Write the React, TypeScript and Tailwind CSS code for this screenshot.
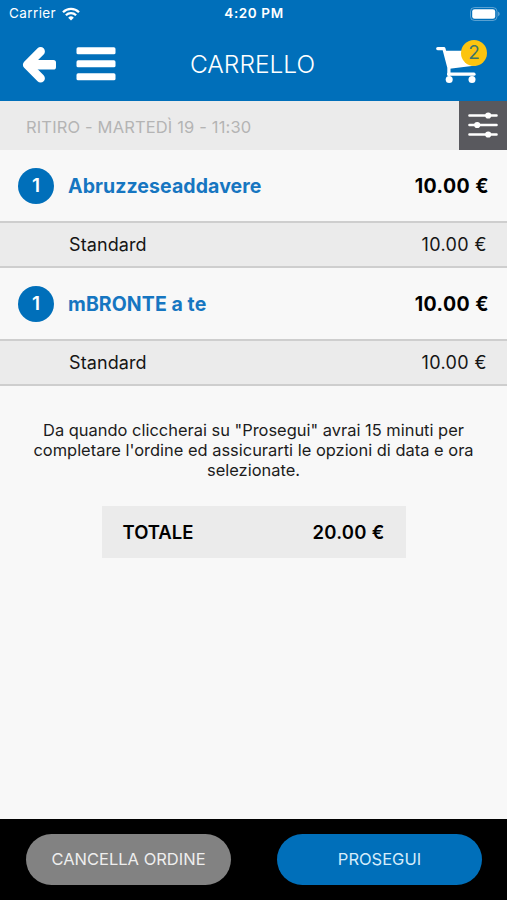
type Item = { qty: number; name: string; variant: string; price: string };

const ITEMS: Item[] = [
  { qty: 1, name: "Abruzzeseaddavere", variant: "Standard", price: "10.00 €" },
  { qty: 1, name: "mBRONTE a te", variant: "Standard", price: "10.00 €" },
];

function WifiIcon() {
  return (
    <svg width="18" height="14" viewBox="0 0 18 14" fill="none" stroke="white" strokeWidth="2.3">
      <path d="M1 5.2a11.4 11.4 0 0 1 16 0" />
      <path d="M3.9 8.2a7.3 7.3 0 0 1 10.2 0" />
      <path d="M9 13.6 6.2 10.7a4 4 0 0 1 5.6 0Z" fill="white" stroke="none" />
    </svg>
  );
}

function BatteryIcon() {
  return (
    <svg width="31" height="14" viewBox="0 0 31 14">
      <rect x="0.5" y="0.5" width="26.5" height="13" rx="4" fill="none" stroke="white" strokeOpacity="0.35" />
      <rect x="2.2" y="2.2" width="23" height="9.6" rx="2.4" fill="white" />
      <path d="M28.3 4.8c1.6.6 1.6 3.8 0 4.4Z" fill="white" fillOpacity="0.5" />
    </svg>
  );
}

function BackIcon() {
  return (
    <svg width="34" height="37" viewBox="0 0 34 37" fill="none" stroke="white" strokeLinejoin="round">
      <path d="M18.6 5.4 5.2 18.8l13.4 13.4" strokeWidth="8.6" strokeLinecap="round" />
      <rect x="8" y="14" width="26" height="9.6" rx="2.6" fill="white" stroke="none" />
    </svg>
  );
}

function MenuIcon() {
  return (
    <svg width="40" height="34" viewBox="0 0 40 34" fill="white">
      <rect x="0.5" y="0.3" width="39" height="7" rx="1.6" />
      <rect x="0.5" y="13.3" width="39" height="7" rx="1.6" />
      <rect x="0.5" y="26.3" width="39" height="7" rx="1.6" />
    </svg>
  );
}

function CartIcon() {
  return (
    <svg width="44" height="38" viewBox="0 0 44 38" fill="none" stroke="white">
      <path d="M1.7 3.6h6.2l5 19v7" strokeWidth="3.2" strokeLinecap="round" strokeLinejoin="round" />
      <path d="M8.2 5.8H42l-2.2 14.6-26.2 3.4Z" fill="white" stroke="none" />
      <path d="M12.6 29.2H38" strokeWidth="3.2" strokeLinecap="round" />
      <circle cx="13.2" cy="34.4" r="3.5" fill="white" stroke="none" />
      <circle cx="36" cy="34.4" r="3.5" fill="white" stroke="none" />
    </svg>
  );
}

function SlidersIcon() {
  return (
    <svg width="30" height="26" viewBox="0 0 30 26" fill="white" stroke="white" strokeWidth="2.4" strokeLinecap="round">
      <path d="M1.4 3.5h27.2M1.4 13h27.2M1.4 22.5h27.2" />
      <g stroke="none">
        <circle cx="20.2" cy="3.5" r="3.1" />
        <circle cx="9.2" cy="13" r="3.1" />
        <circle cx="20.2" cy="22.5" r="3.1" />
      </g>
    </svg>
  );
}

function CartRow({ item }: { item: Item }) {
  return (
    <li>
      <div className="flex h-[71px] items-center px-[18px] text-[19.5px]">
        <span className="flex size-9 items-center justify-center rounded-full bg-[#006fba] pt-0.5 text-[19px] font-semibold text-white">
          {item.qty}
        </span>
        <span className="ml-3.5 pt-0.5 font-bold tracking-[0.08px] text-[#1676c1]">{item.name}</span>
        <span className="ml-auto pt-0.5 font-bold tracking-[0.45px] text-black">{item.price}</span>
      </div>
      <div className="flex h-[47px] items-center justify-between border-y-2 border-[#cecece] bg-[#ebebeb] pr-5 pb-px pl-[69px] text-[18px] text-[#151515]">
        <span className="tracking-[0.1px]">{item.variant}</span>
        <span className="tracking-[0.4px]">{item.price}</span>
      </div>
    </li>
  );
}

export default function App() {
  return (
    <div className="flex h-[900px] w-[507px] flex-col overflow-hidden bg-[#f8f8f8] font-['Inter',sans-serif]">
      <header className="h-[101px] bg-[#006fba] text-white">
        <div className="grid h-[27px] grid-cols-3 items-center pr-1.5 pl-[9px] text-[13.5px]">
          <div className="flex items-center gap-1.5">
            <span className="tracking-[0.4px]">Carrier</span>
            <WifiIcon />
          </div>
          <span className="pr-0.5 text-center font-semibold tracking-[0.6px]">4:20 PM</span>
          <div className="flex justify-end">
            <BatteryIcon />
          </div>
        </div>
        <div className="grid h-[74px] grid-cols-3 items-center">
          <div className="flex items-center gap-5 pl-[22px]">
            <BackIcon />
            <MenuIcon />
          </div>
          <h1 className="pr-0.5 text-center text-[24.5px] font-light">CARRELLO</h1>
          <div className="relative mr-[27px] ml-auto">
            <CartIcon />
            <span className="absolute -top-[5px] left-[25px] flex size-[26px] items-center justify-center rounded-full bg-[#fcc40f] text-[19px] text-[#3f7468]">
              2
            </span>
          </div>
        </div>
      </header>

      <div className="flex h-[49px] bg-[#ebebeb]">
        <p className="flex flex-1 items-center pt-[3px] pl-[26px] text-[16.5px] tracking-[0.15px] text-[#b4b4b4]">
          RITIRO - MARTEDÌ 19 - 11:30
        </p>
        <button className="flex w-12 items-center justify-center bg-[#59595e] pb-0.5">
          <SlidersIcon />
        </button>
      </div>

      <ul>
        {ITEMS.map((item) => (
          <CartRow key={item.name} item={item} />
        ))}
      </ul>

      <p className="mx-auto mt-[34px] w-[450px] text-center text-[16.45px] leading-[20px] text-[#1c1c1c]">
        Da quando cliccherai su "Prosegui" avrai 15 minuti per completare l'ordine ed assicurarti le opzioni di data e ora selezionate.
      </p>

      <div className="mx-auto mt-[26px] flex h-[52px] w-[304px] items-center justify-between bg-[#ebebeb] px-[21px] pt-0.5 text-[18.5px] font-semibold text-black">
        <span>TOTALE</span>
        <span className="tracking-[0.25px]">20.00 €</span>
      </div>

      <footer className="mt-auto flex h-[81px] justify-between bg-black pt-[15px] pr-[25px] pl-[26px] text-[16.5px]">
        <button className="h-[51px] w-[205px] rounded-full bg-[#828282] text-[#eeeeee]">CANCELLA ORDINE</button>
        <button className="h-[51px] w-[205px] rounded-full bg-[#006fba] text-[#d5ecfa]">PROSEGUI</button>
      </footer>
    </div>
  );
}
